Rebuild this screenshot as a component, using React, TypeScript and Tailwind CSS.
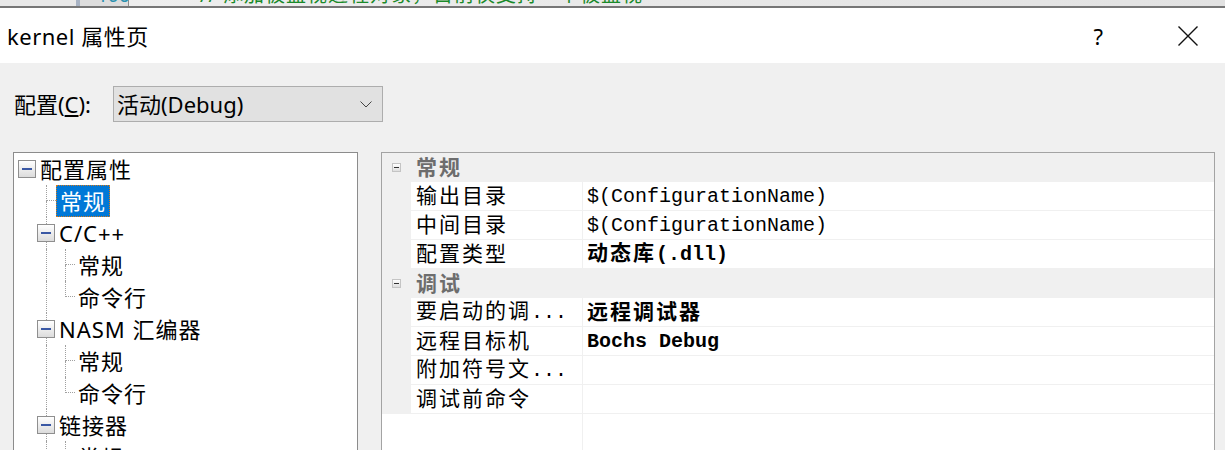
import React from 'react';

const CJK_TEST = /[\u2E80-\u9FFF\uFF00-\uFFEF]/;
const CJK_RUNS = /[\u2E80-\u9FFF\uFF00-\uFFEF]+|[^\u2E80-\u9FFF\uFF00-\uFFEF]+/g;

// property grid text: CJK in song-like width, ascii in mono
function GridText({ text, bold }: { text: string; bold?: boolean }) {
  const runs = text.match(CJK_RUNS) ?? [];
  return (
    <span
      className={`text-[21px] leading-none whitespace-pre [font-family:'Noto_Sans_CJK_SC',sans-serif] ${
        bold ? 'font-bold' : 'font-normal'
      }`}
    >
      {runs.map((run, i) =>
        CJK_TEST.test(run) ? (
          <span key={i} className="tracking-[2px]">
            {run}
          </span>
        ) : (
          <span key={i} className="text-[20px] [font-family:'Liberation_Mono',monospace]">
            {run}
          </span>
        )
      )}
    </span>
  );
}

function ExpandBox() {
  return (
    <div className="w-[18px] h-[18px] shrink-0 border border-[#8f8f8f] bg-linear-to-b from-white to-[#dcdcdc] flex items-center justify-center">
      <div className="w-[10px] h-[2px] bg-[#3a58a4]" />
    </div>
  );
}

function GuideLine() {
  return (
    <div className="w-[19px] h-full shrink-0">
      <div className="ml-[9px] h-full border-l border-dotted border-[#a0a0a0]" />
    </div>
  );
}

function Branch({ last }: { last?: boolean }) {
  return (
    <div className="w-[19px] h-full shrink-0 flex flex-col">
      <div className="ml-[9px] w-[10px] h-4 border-l border-b border-dotted border-[#a0a0a0]" />
      {!last && <div className="ml-[9px] h-4 border-l border-dotted border-[#a0a0a0]" />}
    </div>
  );
}

function BoxCell() {
  return (
    <div className="w-[19px] h-full shrink-0 flex flex-col">
      <div className="ml-[9px] h-[7px] border-l border-dotted border-[#a0a0a0]" />
      <ExpandBox />
      <div className="ml-[9px] h-[7px] border-l border-dotted border-[#a0a0a0]" />
    </div>
  );
}

type TreeRow = { label: string; kind: 'group' | 'leaf1' | 'leaf2'; last?: boolean; selected?: boolean };

const treeRows: TreeRow[] = [
  { label: '常规', kind: 'leaf1', selected: true },
  { label: 'C/C++', kind: 'group' },
  { label: '常规', kind: 'leaf2' },
  { label: '命令行', kind: 'leaf2', last: true },
  { label: 'NASM 汇编器', kind: 'group' },
  { label: '常规', kind: 'leaf2' },
  { label: '命令行', kind: 'leaf2', last: true },
  { label: '链接器', kind: 'group' },
  { label: '常规', kind: 'leaf2' },
  { label: '命令行', kind: 'leaf2', last: true },
];

type GridRow = { category: string; items: { name: string; value: string; bold?: boolean }[] };

const gridRows: GridRow[] = [
  {
    category: '常规',
    items: [
      { name: '输出目录', value: '$(ConfigurationName)' },
      { name: '中间目录', value: '$(ConfigurationName)' },
      { name: '配置类型', value: '动态库(.dll)', bold: true },
    ],
  },
  {
    category: '调试',
    items: [
      { name: '要启动的调...', value: '远程调试器', bold: true },
      { name: '远程目标机', value: 'Bochs Debug', bold: true },
      { name: '附加符号文...', value: '' },
      { name: '调试前命令', value: '' },
    ],
  },
];

export default function App() {
  return (
    <div className="w-[1225px] h-[450px] overflow-hidden bg-[#f0f0f0] text-black [font-family:'Noto_Sans','Noto_Sans_CJK_SC',sans-serif]">
      {/* editor window peeking out behind the dialog */}
      <div className="h-[6px] overflow-hidden flex bg-[#e4e4e4]">
        <div className="w-[76px] bg-[#e8e8e8]" />
        <div className="w-[4px] bg-[#a8b3c4]" />
        <div className="w-[48px] bg-[#dddddd]">
          <div className="-mt-[15px] pl-[17px] text-[19px] leading-[20px] text-[#2b91af]">106</div>
        </div>
        <div className="w-[1px] bg-[#8c8c8c]" />
        <div className="flex-1 bg-linear-to-r from-[#eeeeee] to-[#e2e2e2]">
          <div className="-mt-[15px] pl-[71px] text-[20px] leading-[20px] tracking-[1px] text-[#1a8a2a] whitespace-nowrap">
            // 添加被监视进程对象，目前仅支持一个被监视
          </div>
        </div>
      </div>
      <div className="h-[2px] bg-[#767676]" />

      {/* title bar */}
      <div className="h-[55px] bg-white flex items-center">
        <span className="ml-[7px] text-[22px] tracking-[0.5px] leading-none">kernel 属性页</span>
        <div className="ml-auto mr-[27px] flex items-center">
          <span className="text-[22px] leading-none">?</span>
          <svg className="ml-[75px]" width="20" height="20" viewBox="0 0 20 20">
            <path d="M0.5 0.5 L19.5 19.5 M19.5 0.5 L0.5 19.5" stroke="#111" strokeWidth="1.4" fill="none" />
          </svg>
        </div>
      </div>

      {/* configuration selector */}
      <div className="flex items-center pl-[14px] pt-[23px]">
        <span className="text-[22px] leading-none w-[99px]">
          配置(<span className="underline underline-offset-2">C</span>):
        </span>
        <div className="w-[270px] h-[36px] border border-[#adadad] bg-[#e1e1e1] flex items-center pl-[3px]">
          <span className="text-[22px] leading-none">活动(Debug)</span>
          <svg className="ml-auto mr-[10px]" width="12" height="7" viewBox="0 0 12 7">
            <path d="M0.5 0.5 L6 6 L11.5 0.5" stroke="#444" strokeWidth="1" fill="none" />
          </svg>
        </div>
      </div>

      <div className="flex pl-[13px] mt-[30px]">
        {/* tree */}
        <div className="w-[345px] h-[320px] border border-[#8c8c8c] bg-white overflow-hidden text-[22px] tracking-[1px] leading-none">
          <div className="h-8 flex items-center pl-[4px]">
            <ExpandBox />
            <span className="ml-[4px]">配置属性</span>
          </div>
          {treeRows.map((row, i) => (
            <div key={i} className="h-8 flex items-stretch pl-[4px]">
              <div className="w-[19px] shrink-0" />
              {row.kind === 'leaf1' && <Branch />}
              {row.kind === 'group' && <BoxCell />}
              {row.kind === 'leaf2' && (
                <>
                  <GuideLine />
                  <Branch last={row.last} />
                </>
              )}
              <div
                className={`flex items-center px-[3px] ${
                  row.selected ? 'bg-[#0078d7] text-white border border-dotted border-[#d87a1a]' : ''
                }`}
              >
                {row.label}
              </div>
            </div>
          ))}
        </div>

        {/* property grid */}
        <div className="ml-[23px] w-[834px] h-[320px] border border-[#a3a3a3] bg-white flex flex-col overflow-hidden">
          {gridRows.map((group) => (
            <div key={group.category}>
              <div className="h-[29px] flex items-center bg-[#f0f0f0]">
                <div className="w-[29px] shrink-0 flex items-center justify-center">
                  <div className="w-[9px] h-[9px] border border-[#c4c4c4] bg-linear-to-b from-white to-[#dedede] flex items-center justify-center">
                    <div className="w-[5px] h-[1px] bg-[#333333]" />
                  </div>
                </div>
                <span className="pl-[5px] pb-[2px] text-[21px] tracking-[2px] font-bold leading-none text-[#6d6d6d] [font-family:'Noto_Sans_CJK_SC',sans-serif]">
                  {group.category}
                </span>
              </div>
              {group.items.map((item) => (
                <div key={item.name} className="h-[29px] flex">
                  <div className="w-[29px] shrink-0 bg-[#f0f0f0]" />
                  <div className="w-[172px] shrink-0 flex items-center pl-[5px] pb-[3px] border-r border-b border-[#f0f0f0]">
                    <GridText text={item.name} />
                  </div>
                  <div className="flex-1 flex items-center pl-[4px] pb-[3px] border-b border-[#f0f0f0]">
                    {item.value && <GridText text={item.value} bold={item.bold} />}
                  </div>
                </div>
              ))}
            </div>
          ))}
          <div className="flex-1 flex">
            <div className="w-[201px] shrink-0 border-r border-[#f0f0f0]" />
            <div className="flex-1" />
          </div>
        </div>
      </div>
    </div>
  );
}
